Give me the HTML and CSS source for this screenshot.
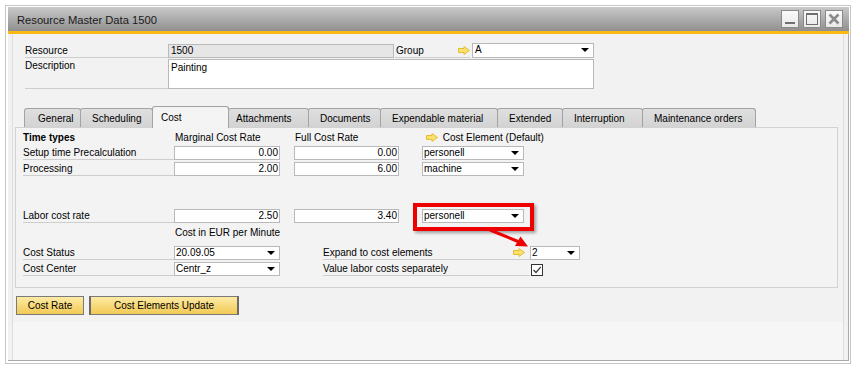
FILE: index.html
```html
<!DOCTYPE html>
<html lang="en">
<head>
    <meta charset="UTF-8">
    <title>Resource Master Data 1500</title>
    <link rel="stylesheet" href="styles.css">
</head>
<body>

<div class="window">
    <div class="titlebar">
        <span class="title">Resource Master Data 1500</span>
        <div class="win-btns">
            <span class="win-btn"><svg width="16" height="16" viewBox="0 0 16 16"><rect x="3" y="11" width="10" height="2" fill="#6f6f6f"/></svg></span>
            <span class="win-btn"><svg width="16" height="16" viewBox="0 0 16 16"><rect x="2.5" y="2.5" width="11" height="11" fill="none" stroke="#6f6f6f"/><rect x="2" y="2" width="12" height="2" fill="#6f6f6f"/></svg></span>
            <span class="win-btn"><svg width="16" height="16" viewBox="0 0 16 16"><path d="M3.5 3.5 L12.5 12.5 M12.5 3.5 L3.5 12.5" stroke="#8a8a8a" stroke-width="2.6"/></svg></span>
        </div>
    </div>
    <div class="accent"></div>

    <div class="body">
        <div class="inner">
            <!-- header fields -->
            <div class="head">
                <div class="head-row first-row">
                    <span class="label head-label">Resource</span>
                    <span class="field readonly res-field">1500</span>
                    <span class="label group-label">Group <svg class="arrow-ico" width="12" height="9" viewBox="0 0 12 9"><path d="M0.5 2.5 H6 V0.5 L11.5 4.5 L6 8.5 V6.5 H0.5 Z" fill="#fbe06a" stroke="#e2bd3a"/></svg></span>
                    <span class="combo group-combo">A<i class="caret"></i></span>
                </div>
                <div class="head-row">
                    <span class="label head-label desc-label">Description</span>
                    <span class="field area">Painting</span>
                </div>
            </div>

            <!-- tabs -->
            <div class="tabs">
                <span class="tab first">General</span>
                <span class="tab">Scheduling</span>
                <span class="tab active">Cost</span>
                <span class="tab tight">Attachments</span>
                <span class="tab">Documents</span>
                <span class="tab">Expendable material</span>
                <span class="tab">Extended</span>
                <span class="tab">Interruption</span>
                <span class="tab">Maintenance orders</span>
            </div>

            <div class="panel">
                <div class="row top-row">
                    <span class="col-label"><b>Time types</b></span>
                    <span class="col-one caption">Marginal Cost Rate</span>
                    <span class="col-two caption">Full Cost Rate</span>
                    <span class="col-three caption"><svg class="arrow-ico" width="12" height="9" viewBox="0 0 12 9"><path d="M0.5 2.5 H6 V0.5 L11.5 4.5 L6 8.5 V6.5 H0.5 Z" fill="#fbe06a" stroke="#e2bd3a"/></svg> Cost Element (Default)</span>
                </div>
                <div class="row">
                    <span class="col-label label">Setup time Precalculation</span>
                    <span class="col-one field num">0.00</span>
                    <span class="col-two field num">0.00</span>
                    <span class="col-three combo">personell<i class="caret"></i></span>
                </div>
                <div class="row">
                    <span class="col-label label">Processing</span>
                    <span class="col-one field num">2.00</span>
                    <span class="col-two field num">6.00</span>
                    <span class="col-three combo">machine<i class="caret"></i></span>
                </div>

                <div class="row labor-row">
                    <span class="col-label label">Labor cost rate</span>
                    <span class="col-one field num">2.50</span>
                    <span class="col-two field num">3.40</span>
                    <span class="col-three combo">personell<i class="caret"></i></span>
                </div>
                <div class="row note-row">
                    <span class="col-label"></span>
                    <span class="caption note">Cost in EUR per Minute</span>
                </div>
                <div class="row">
                    <span class="col-label label">Cost Status</span>
                    <span class="col-one combo">20.09.05<i class="caret"></i></span>
                    <span class="label side-label">Expand to cost elements <svg class="arrow-ico" width="12" height="9" viewBox="0 0 12 9"><path d="M0.5 2.5 H6 V0.5 L11.5 4.5 L6 8.5 V6.5 H0.5 Z" fill="#fbe06a" stroke="#e2bd3a"/></svg></span>
                    <span class="combo small-combo">2<i class="caret"></i></span>
                </div>
                <div class="row">
                    <span class="col-label label">Cost Center</span>
                    <span class="col-one combo">Centr_z<i class="caret"></i></span>
                    <span class="label side-label">Value labor costs separately</span>
                    <span class="checkbox"><svg width="10" height="10" viewBox="0 0 10 10"><path d="M1.5 5 L4 7.5 L8.8 1.8" fill="none" stroke="#3a3a3a" stroke-width="1.2"/></svg></span>
                </div>

                <!-- annotation -->
                <div class="redbox"></div>
                <svg class="red-arrow" width="50" height="24" viewBox="0 0 50 24">
                    <line x1="4" y1="2" x2="32" y2="13.5" stroke="#ee0000" stroke-width="3"/>
                    <polygon points="42,18.5 34.5,8.5 29,18" fill="#ee0000"/>
                </svg>
            </div>

            <div class="actions">
                <button class="btn">Cost Rate</button>
                <button class="btn default">Cost Elements Update</button>
            </div>
        </div>
        <div class="strip"></div>
    </div>
</div>

</body>
</html>
```

FILE: styles.css
```css
body {
    margin: 0;
    background: #ffffff;
    font-family: 'Liberation Sans', Arial, sans-serif;
    font-size: 10px;
    color: #000000;
}

/* Window frame */
.window {
    margin: 5px 0 0 5px;
    width: 846px;
    height: 359px;
    box-sizing: border-box;
    border: 1px solid #c6c6c6;
    padding: 1px 1px 1px 2px;
    background: #ffffff;
}
.titlebar {
    height: 24px;
    display: flex;
    align-items: center;
    justify-content: space-between;
    padding: 0 6px 0 9px;
    background: linear-gradient(#c9c9c9, #8f8f8f);
}
.title {
    font-size: 11.2px;
    color: #1a1a1a;
    padding-top: 1px;
}
.win-btns {
    display: flex;
    gap: 4px;
}
.win-btn {
    width: 18px;
    height: 18px;
    box-sizing: border-box;
    border: 1px solid #8a8a8a;
    background: linear-gradient(#fafafa, #e9e9e9);
    display: flex;
    align-items: center;
    justify-content: center;
}
.accent {
    height: 3px;
    background: #fbb812;
}

.body {
    height: 327px;
    box-sizing: border-box;
    background: #f1f1f1;
    border-right: 1px solid #a9a9a9;
    border-bottom: 1px solid #a9a9a9;
    padding: 0 4px 0 4px;
    display: flex;
    flex-direction: column;
}
.inner {
    background: #f2f2f2;
    border-left: 1px solid #dedede;
    border-right: 1px solid #dedede;
    padding-top: 10px;
}
.strip {
    flex: 1;
    background: #f6f6f6;
    border-left: 1px solid #dedede;
    border-right: 1px solid #dedede;
}

/* Generic controls */
.label {
    display: inline-block;
    height: 14px;
    line-height: 13px;
    box-sizing: border-box;
    border-bottom: 1px solid #cdcdcd;
}
.field,
.combo {
    display: inline-block;
    height: 14px;
    line-height: 12px;
    box-sizing: border-box;
    border: 1px solid #b9b9b9;
    background: #ffffff;
    padding: 0 1px;
    white-space: nowrap;
    overflow: hidden;
}
.field.num {
    text-align: right;
}
.field.readonly {
    background: #e6e6e6;
}
.combo {
    position: relative;
}
.caret {
    position: absolute;
    right: 4px;
    top: 4px;
    border-left: 4px solid transparent;
    border-right: 4px solid transparent;
    border-top: 4px solid #000000;
}
.arrow-ico {
    vertical-align: -1px;
}

/* Header part */
.head {
    margin-left: 12px;
}
.head-row {
    display: flex;
    align-items: flex-start;
    margin-bottom: 2px;
}
.head-row.first-row {
    margin-bottom: 1px;
}
.head-label {
    width: 143px;
}
.res-field {
    width: 226px;
    padding-left: 2px;
}
.group-label {
    width: 75px;
    margin-left: 1px;
    margin-right: 2px;
    padding-left: 1px;
}
.group-label .arrow-ico {
    margin-left: 31px;
}
.group-combo {
    width: 122px;
    margin-top: -1px;
    height: 15px;
    padding-left: 2px;
}
.desc-label {
    height: 30px;
}
.area {
    width: 426px;
    height: 30px;
    padding: 2px 2px;
}

/* Tabs */
.tabs {
    display: flex;
    align-items: flex-end;
    margin: 17px 0 0 11px;
    height: 21px;
    position: relative;
    z-index: 1;
}
.tab {
    box-sizing: border-box;
    height: 19px;
    line-height: 19px;
    padding-left: 11px;
    margin-left: -1px;
    border: 1px solid #a3a3a3;
    border-bottom: none;
    border-radius: 3px 3px 0 0;
    background: linear-gradient(#dfdfdf, #d3d3d3);
    white-space: nowrap;
}
.tab:nth-child(1) { width: 57px; margin-left: 0; padding-left: 13px; }
.tab:nth-child(2) { width: 73px; }
.tab:nth-child(3) { width: 77px; }
.tab:nth-child(4) { width: 81px; }
.tab:nth-child(5) { width: 73px; }
.tab:nth-child(6) { width: 118px; }
.tab:nth-child(7) { width: 66px; }
.tab:nth-child(8) { width: 81px; }
.tab:nth-child(9) { width: 114px; }
.tab.active {
    height: 22px;
    line-height: 21px;
    padding-left: 8px;
    background: #f4f4f4;
    margin-bottom: -1px;
}
.tab.tight {
    padding-left: 7px;
}

/* Tab panel */
.panel {
    position: relative;
    margin-left: 2px;
    width: 823px;
    height: 161px;
    box-sizing: border-box;
    border: 1px solid #d2d2d2;
    background: #f3f3f3;
    padding: 3px 0 0 7px;
}
.row {
    display: flex;
    align-items: flex-start;
    height: 14px;
    margin-bottom: 2px;
}
.top-row {
    margin-bottom: 1px;
}
.col-label {
    width: 151px;
    flex-shrink: 0;
    line-height: 13px;
}
.col-one {
    width: 106px;
    margin-right: 14px;
}
.col-two {
    width: 105px;
    margin-right: 23px;
}
.col-three {
    width: 102px;
}
.caption {
    line-height: 13px;
    white-space: nowrap;
}
.col-one.caption {
    padding-left: 1px;
}
.col-three.caption {
    padding-left: 3px;
}
.col-three.caption .arrow-ico {
    margin-right: 2px;
}
.labor-row {
    margin-top: 33px;
}
.note-row {
    height: 16px;
    margin-bottom: 5px;
}
.note {
    line-height: 16px;
    padding-left: 1px;
}
.side-label {
    display: flex;
    justify-content: space-between;
    align-items: flex-start;
    width: 207px;
    margin-left: 29px;
    padding-right: 5px;
}
.side-label .arrow-ico {
    margin-top: 2px;
}
.small-combo {
    width: 50px;
}
.checkbox {
    width: 12px;
    height: 12px;
    box-sizing: border-box;
    margin: 2px 0 0 1px;
    border: 1px solid #333333;
    background: #ffffff;
    display: flex;
    align-items: center;
    justify-content: center;
}

/* Red annotation over the labour cost element */
.redbox {
    position: absolute;
    left: 397px;
    top: 75px;
    width: 121px;
    height: 28px;
    box-sizing: border-box;
    border: 4px solid #ee0000;
    box-shadow: 2px 2px 3px rgba(0, 0, 0, 0.35);
}
.red-arrow {
    position: absolute;
    left: 470px;
    top: 100px;
}

/* Buttons */
.actions {
    display: flex;
    gap: 5px;
    margin: 8px 0 7px 3px;
}
.btn {
    height: 19px;
    box-sizing: border-box;
    border: 1px solid #7a7a7a;
    background: linear-gradient(#fdeba4, #f2c955);
    font-family: 'Liberation Sans', Arial, sans-serif;
    font-size: 10px;
    color: #000000;
    padding: 0;
    width: 68px;
}
.btn.default {
    width: 150px;
    border-left: 2px solid #6a6a6a;
    border-right: 2px solid #6a6a6a;
}
```
